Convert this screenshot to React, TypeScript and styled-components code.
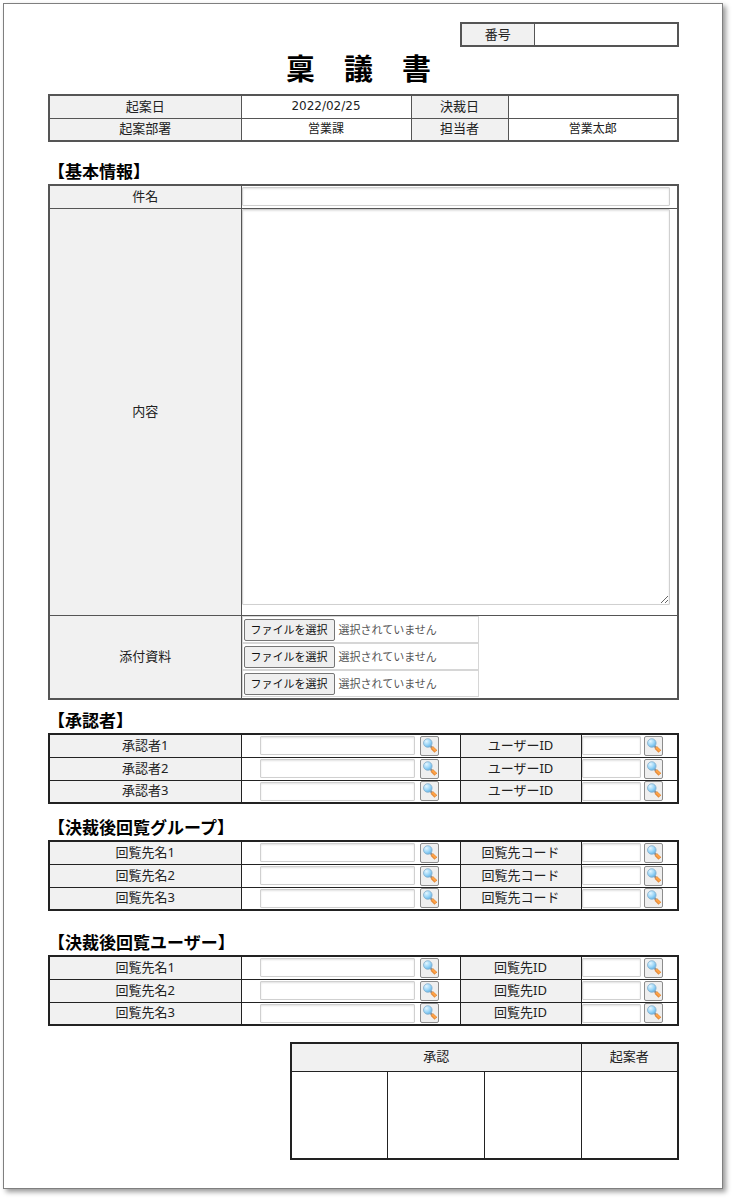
import React from 'react';
import styled, { createGlobalStyle } from 'styled-components';

const GlobalStyle = createGlobalStyle`
  *, *::before, *::after { box-sizing: border-box; }
  body {
    margin: 0;
    background: #fff;
    color: #222;
    font-family: 'Noto Sans', 'Noto Sans CJK JP', sans-serif;
    font-size: 13px;
    line-height: 18px;
  }
  input, textarea, button { font: inherit; color: inherit; }
`;

const Page = styled.div`
  display: flow-root;
`;

const Sheet = styled.main`
  margin: 3px 9px 9px 3px;
  padding: 18px 43px 28px 44px;
  border: 1px solid #7f7f7f;
  background: #fff;
  box-shadow: 3px 3px 5px rgba(0, 0, 0, 0.4);
`;

const Title = styled.h1`
  margin: 0 0 3px;
  padding-right: 10px;
  font-size: 29px;
  line-height: 44px;
  font-weight: 700;
  text-align: center;
  color: #000;
`;

const Heading = styled.h2<{ $gap: number }>`
  margin: ${(p) => p.$gap}px 0 0;
  font-size: 17px;
  line-height: 24px;
  font-weight: 700;
  color: #000;
`;

const Grid = styled.table<{ $line: string; $width?: string; $gap?: number }>`
  width: ${(p) => p.$width ?? '100%'};
  margin: ${(p) => p.$gap ?? 0}px 0 0 auto;
  table-layout: fixed;
  border-collapse: collapse;
  border: 2px solid ${(p) => p.$line};
  th, td { border: 1px solid ${(p) => p.$line}; }
`;

const Col = styled.col<{ $w?: number }>`
  width: ${(p) => (p.$w ? `${p.$w}px` : 'auto')};
`;

const Row = styled.tr<{ $h: number }>`
  height: ${(p) => p.$h}px;
`;

const Label = styled.th`
  padding: 0 0 2px;
  background: #f1f1f1;
  font-weight: 400;
  text-align: center;
  vertical-align: middle;
`;

const Value = styled.td`
  padding: 0;
  font-size: 12px;
  text-align: center;
  vertical-align: middle;
`;

const DateValue = styled(Value)`
  padding-bottom: 2px;
  font-family: 'DejaVu Sans', sans-serif;
`;

const Field = styled.td<{ $top?: boolean }>`
  padding: 0;
  vertical-align: ${(p) => (p.$top ? 'top' : 'middle')};
`;

const TextInput = styled.input`
  display: block;
  min-width: 0;
  height: 19px;
  padding: 0 3px;
  border: 1px solid #d0d0d0;
  border-radius: 1px;
  background: #fff;
  box-shadow: inset 0 1px 2px rgba(0, 0, 0, 0.12);
`;

const SubjectInput = styled(TextInput)`
  width: calc(100% - 7px);
`;

const Content = styled.textarea`
  display: block;
  width: calc(100% - 7px);
  height: 396px;
  padding: 3px;
  border: 1px solid #d0d0d0;
  border-radius: 1px;
  background: #fff;
  box-shadow: inset 0 1px 2px rgba(0, 0, 0, 0.12);
  resize: both;
`;

const FileList = styled.div`
  display: flex;
  flex-direction: column;
  align-items: flex-start;
`;

const FileField = styled.label`
  display: flex;
  align-items: center;
  gap: 4px;
  width: 237px;
  height: 27px;
  padding: 0 1px;
  border: 1px solid #d6d6d6;
  font-size: 11px;
  color: #555;
`;

const HiddenFile = styled.input`
  position: absolute;
  width: 1px;
  height: 1px;
  opacity: 0;
`;

const FileButton = styled.span`
  height: 22px;
  padding: 0 6px;
  border: 1px solid #767676;
  border-radius: 2px;
  background: #efefef;
  line-height: 20px;
  color: #111;
`;

const Lookup = styled.div<{ $name?: boolean }>`
  display: flex;
  align-items: center;
  gap: ${(p) => (p.$name ? 5 : 3)}px;
  padding: ${(p) => (p.$name ? '0 21px 0 18px' : '0 14px 0 0')};
  ${TextInput} { flex: 1; }
`;

const SearchButton = styled.button`
  display: flex;
  flex: none;
  width: 19px;
  height: 20px;
  padding: 1px;
  border: 1px solid #8c8c8c;
  border-radius: 2px;
  background: #efefef;
  svg { display: block; }
`;

const Glass = () => (
  <svg width="15" height="16" viewBox="0 0 15 16" aria-hidden="true">
    <defs>
      <radialGradient id="lens" cx="0.35" cy="0.3" r="0.8">
        <stop offset="0" stopColor="#e4f6ff" />
        <stop offset="0.5" stopColor="#a0d8f8" />
        <stop offset="1" stopColor="#55aee6" />
      </radialGradient>
    </defs>
    <path d="M8 7.6 L10.2 9.8" stroke="#8f8f8f" strokeWidth="2.2" />
    <path d="M9.8 9.4 L13.8 13.4" stroke="#e08a3c" strokeWidth="3.6" />
    <path d="M10.2 9.4 L13.8 13" stroke="#ffa347" strokeWidth="2" />
    <circle cx="5.8" cy="5" r="4.3" fill="url(#lens)" stroke="#86aecb" strokeWidth="0.8" />
  </svg>
);

const files = [1, 2, 3];

type LookupTableProps = { name: string; code: string };

const LookupTable = ({ name, code }: LookupTableProps) => (
  <Grid $line="#222">
    <colgroup>
      <Col $w={192} />
      <Col />
      <Col $w={121} />
      <Col $w={97} />
    </colgroup>
    <tbody>
      {[1, 2, 3].map((n) => (
        <Row $h={23} key={n}>
          <Label scope="row">{name}{n}</Label>
          <Field>
            <Lookup $name>
              <TextInput type="text" aria-label={`${name}${n}`} />
              <SearchButton type="button" aria-label="検索"><Glass /></SearchButton>
            </Lookup>
          </Field>
          <Label>{code}</Label>
          <Field>
            <Lookup>
              <TextInput type="text" aria-label={`${code} ${n}`} />
              <SearchButton type="button" aria-label="検索"><Glass /></SearchButton>
            </Lookup>
          </Field>
        </Row>
      ))}
    </tbody>
  </Grid>
);

export default function App() {
  return (
    <Page>
      <GlobalStyle />
      <Sheet>
        <Grid $line="#555" $width="219px">
          <colgroup>
            <Col $w={73} />
            <Col />
          </colgroup>
          <tbody>
            <Row $h={23}>
              <Label scope="row">番号</Label>
              <Value />
            </Row>
          </tbody>
        </Grid>

        <Title>稟　議　書</Title>

        <Grid $line="#555">
          <colgroup>
            <Col $w={192} />
            <Col />
            <Col $w={97} />
            <Col $w={170} />
          </colgroup>
          <tbody>
            <Row $h={23}>
              <Label scope="row">起案日</Label>
              <DateValue>2022/02/25</DateValue>
              <Label>決裁日</Label>
              <Value />
            </Row>
            <Row $h={23}>
              <Label scope="row">起案部署</Label>
              <Value>営業課</Value>
              <Label>担当者</Label>
              <Value>営業太郎</Value>
            </Row>
          </tbody>
        </Grid>

        <Heading $gap={18}>【基本情報】</Heading>
        <Grid $line="#555">
          <colgroup>
            <Col $w={192} />
            <Col />
          </colgroup>
          <tbody>
            <Row $h={23}>
              <Label scope="row"><label htmlFor="subject">件名</label></Label>
              <Field><SubjectInput id="subject" type="text" /></Field>
            </Row>
            <Row $h={407}>
              <Label scope="row"><label htmlFor="content">内容</label></Label>
              <Field $top><Content id="content" /></Field>
            </Row>
            <Row $h={84}>
              <Label scope="row">添付資料</Label>
              <Field>
                <FileList>
                  {files.map((n) => (
                    <FileField key={n}>
                      <HiddenFile type="file" />
                      <FileButton>ファイルを選択</FileButton>
                      選択されていません
                    </FileField>
                  ))}
                </FileList>
              </Field>
            </Row>
          </tbody>
        </Grid>

        <Heading $gap={9}>【承認者】</Heading>
        <LookupTable name="承認者" code="ユーザーID" />

        <Heading $gap={12}>【決裁後回覧グループ】</Heading>
        <LookupTable name="回覧先名" code="回覧先コード" />

        <Heading $gap={20}>【決裁後回覧ユーザー】</Heading>
        <LookupTable name="回覧先名" code="回覧先ID" />

        <Grid $line="#222" $width="389px" $gap={16}>
          <colgroup>
            <Col $w={96} />
            <Col $w={97} />
            <Col $w={97} />
            <Col />
          </colgroup>
          <tbody>
            <Row $h={28}>
              <Label scope="colgroup" colSpan={3}>承認</Label>
              <Label scope="col">起案者</Label>
            </Row>
            <Row $h={88}>
              <Value />
              <Value />
              <Value />
              <Value />
            </Row>
          </tbody>
        </Grid>
      </Sheet>
    </Page>
  );
}
